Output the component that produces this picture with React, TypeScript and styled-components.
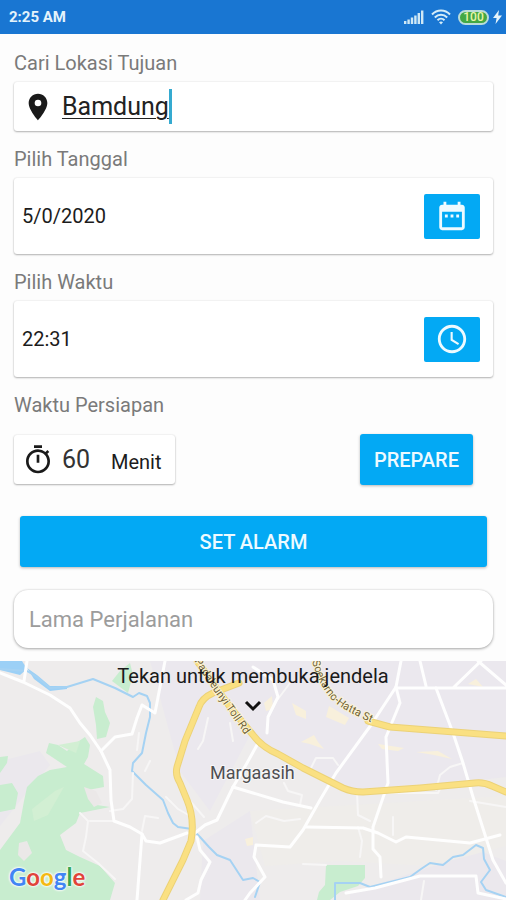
import React, { useState } from "react";
import styled, { createGlobalStyle } from "styled-components";

const GlobalStyle = createGlobalStyle`
  *, *::before, *::after { box-sizing: border-box; }
  body { margin: 0; background: #fdfdfd; font-family: Roboto, "Noto Sans", sans-serif; }
  button, input { font: inherit; }
`;

const Page = styled.div`
  display: flex;
  flex-direction: column;
  min-height: 100vh;
  background: #fdfdfd;
  color: #1c1c1c;
`;

const StatusBar = styled.header`
  display: flex;
  align-items: center;
  justify-content: space-between;
  height: 34px;
  padding: 0 4px 0 9px;
  background: #1976d2;
  color: #e4f3fb;
  font-size: 15px;
  font-weight: 700;
`;

const StatusIcons = styled.div`
  display: flex;
  align-items: center;
  gap: 7px;
`;

const BatteryGroup = styled.div`
  display: flex;
  align-items: center;
  gap: 4px;
`;

const Battery = styled.span`
  display: flex;
  align-items: center;
  justify-content: center;
  width: 31px;
  height: 15px;
  border: 2px solid #b9dcd9;
  border-radius: 8px;
  background: #43a843;
  color: #e9f5a8;
  font-size: 12px;
  font-weight: 500;
  line-height: 11px;
`;

const Form = styled.form`
  display: flex;
  flex-direction: column;
  gap: 16px;
  padding: 17px 13px 13px 14px;
`;

const Field = styled.div`
  display: flex;
  flex-direction: column;
  gap: 7px;
`;

const Label = styled.label`
  color: #7a7a7a;
  font-size: 20px;
  line-height: 24px;
`;

const Card = styled.div<{ $height: number }>`
  display: flex;
  align-items: center;
  min-height: ${(p) => p.$height}px;
  padding: 0 13px 0 8px;
  border-radius: 3px;
  background: #fff;
  box-shadow: 0 1px 2px rgba(0, 0, 0, 0.28), 0 0 2px rgba(0, 0, 0, 0.12);
`;

const PlaceInput = styled.input`
  field-sizing: content;
  margin-left: 8px;
  padding: 0;
  border: 0;
  outline: 0;
  background: transparent;
  color: #222;
  font-size: 25px;
  line-height: 34px;
  text-decoration: underline;
  text-decoration-thickness: 1px;
  text-underline-offset: 3px;
`;

const Caret = styled.span`
  width: 3px;
  height: 35px;
  background: #35aad0;
`;

const ValueInput = styled.input`
  flex: 1;
  min-width: 0;
  padding: 0;
  border: 0;
  outline: 0;
  background: transparent;
  color: #1c1c1c;
  font-size: 20px;
`;

const IconButton = styled.button`
  display: flex;
  align-items: center;
  justify-content: center;
  width: 56px;
  height: 45px;
  padding: 0;
  border: 0;
  border-radius: 2px;
  background: #03a9f4;
  color: #eefaff;
`;

const PrepareRow = styled.div`
  display: flex;
  align-items: center;
  justify-content: space-between;
  padding: 10px 20px 0 0;
`;

const MinutesCard = styled(Card)`
  width: 161px;
  padding: 0 8px;
`;

const MinutesInput = styled.input`
  width: 49px;
  margin-left: 8px;
  padding: 0;
  border: 0;
  outline: 0;
  background: transparent;
  color: #333;
  font-size: 25px;
`;

const Unit = styled.span`
  padding-top: 4px;
  font-size: 20px;
`;

const ActionButton = styled.button<{ $wide?: boolean }>`
  height: 51px;
  padding: 0 14px;
  margin: ${(p) => (p.$wide ? "15px 6px 7px" : "0")};
  border: 0;
  border-radius: 3px;
  background: #03a9f4;
  box-shadow: 0 1px 3px rgba(0, 0, 0, 0.28);
  color: #eefaff;
  font-size: 20px;
  font-weight: 500;
`;

const DurationInput = styled.input`
  width: 100%;
  height: 58px;
  padding: 0 15px;
  border: 0;
  outline: 0;
  border-radius: 14px;
  background: #fff;
  box-shadow: 0 1px 3px rgba(0, 0, 0, 0.32), 0 0 2px rgba(0, 0, 0, 0.12);
  font-size: 22px;
  &::placeholder { color: #9c9c9c; opacity: 1; }
`;

const MapPanel = styled.section`
  position: relative;
  display: flex;
  flex: 1;
  flex-direction: column;
  justify-content: space-between;
  min-height: 239px;
  overflow: hidden;
  background: #eeecec;
`;

const MapCanvas = styled.svg`
  position: absolute;
  inset: 0;
  width: 100%;
  height: 100%;
`;

const SheetToggle = styled.button`
  position: relative;
  display: flex;
  flex-direction: column;
  align-items: center;
  gap: 12px;
  padding: 3px 0 0;
  border: 0;
  background: transparent;
  color: #1a1a1a;
  font-size: 20px;
  line-height: 24px;
`;

const GoogleLogo = styled.a`
  position: relative;
  align-self: flex-start;
  padding: 0 0 9px 9px;
  font-family: Lato, sans-serif;
  font-size: 24px;
  font-weight: 700;
  line-height: 28px;
  text-decoration: none;
  text-shadow: 0 0 2px #fff, 0 0 2px #fff, 0 0 3px #fff;
`;

const Letter = styled.span<{ $color: string }>`
  color: ${(p) => p.$color};
`;

const logoLetters = [
  ["G", "#4285f4"],
  ["o", "#e0443a"],
  ["o", "#f4b912"],
  ["g", "#4285f4"],
  ["l", "#34a853"],
  ["e", "#e0443a"],
];

const SignalIcon = () => (
  <svg width="20" height="15" viewBox="0 0 20 15" fill="#cfe8f5" aria-hidden="true">
    <rect x="0" y="11" width="2.4" height="3" />
    <rect x="3.4" y="9.5" width="2.4" height="4.5" />
    <rect x="6.8" y="7.5" width="2.4" height="6.5" />
    <rect x="10.2" y="5.5" width="2.4" height="8.5" />
    <rect x="13.6" y="3" width="2.4" height="11" />
    <rect x="17" y="0.5" width="2.4" height="13.5" />
  </svg>
);

const WifiIcon = () => (
  <svg width="20" height="16" viewBox="0 0 20 16" fill="none" stroke="#d5edf8" strokeWidth="2" aria-hidden="true">
    <path d="M1 5.5C6 .2 14 .2 19 5.5" />
    <path d="M3.8 8.5c3.6-3.6 8.8-3.6 12.4 0" />
    <path d="M6.5 11.3c2-2 5-2 7 0" />
    <path d="M8 13.200 10 15.500l2-2.300c-1.200-1-2.800-1-4 0z" fill="#d5edf8" stroke="none" />
  </svg>
);

const BoltIcon = () => (
  <svg width="9" height="14" viewBox="0 0 9 14" fill="#e4f3fb" aria-hidden="true">
    <path d="M6 0 0 8h3.6L2.5 14 9 5.500H5.200z" />
  </svg>
);

const PinIcon = () => (
  <svg width="32" height="32" viewBox="0 0 24 24" fill="#1a1a1a" aria-hidden="true">
    <path d="M12 2C8.130 2 5 5.130 5 9c0 5.250 7 13 7 13s7-7.750 7-13c0-3.870-3.130-7-7-7zm0 9.500a2.500 2.500 0 1 1 0-5 2.500 2.500 0 0 1 0 5z" />
  </svg>
);

const CalendarIcon = () => (
  <svg width="34" height="34" viewBox="0 0 24 24" fill="currentColor" aria-hidden="true">
    <path d="M9 11H7v2h2v-2zm4 0h-2v2h2v-2zm4 0h-2v2h2v-2zm2-7h-1V2h-2v2H8V2H6v2H5c-1.110 0-2 .9-2 2v14c0 1.100.89 2 2 2h14c1.100 0 2-.9 2-2V6c0-1.100-.9-2-2-2zm0 16H5V9h14v11z" />
  </svg>
);

const ClockIcon = () => (
  <svg width="34" height="34" viewBox="0 0 24 24" fill="currentColor" aria-hidden="true">
    <path d="M11.990 2C6.470 2 2 6.480 2 12s4.470 10 9.990 10C17.520 22 22 17.520 22 12S17.520 2 11.990 2zM12 20c-4.420 0-8-3.580-8-8s3.580-8 8-8 8 3.580 8 8-3.580 8-8 8zm.5-13H11v6l5.250 3.150.75-1.230-4.500-2.670z" />
  </svg>
);

const TimerIcon = () => (
  <svg width="32" height="32" viewBox="0 0 24 24" fill="#1a1a1a" aria-hidden="true">
    <path d="M15 1H9v2h6V1zm-4 13h2V8h-2v6zm8.030-6.610 1.420-1.420c-.43-.51-.9-.99-1.410-1.410l-1.420 1.420A8.962 8.962 0 0 0 12 4a9 9 0 1 0 9 9c0-2.120-.74-4.070-1.970-5.610zM12 20c-3.870 0-7-3.130-7-7s3.130-7 7-7 7 3.130 7 7-3.130 7-7 7z" />
  </svg>
);

const ChevronIcon = () => (
  <svg width="18" height="12" viewBox="0 0 18 12" fill="none" stroke="#111" strokeWidth="3" aria-hidden="true">
    <path d="M2 2l7 7 7-7" />
  </svg>
);

const parks = [
  "M0 189 20 162 24 140 27 126 38 115 50 109 67 106 46 92 49 82 58 84 67 90 76 82 85 76 90 84 88 96 84 103 103 115 104 126 88 129 97 144 110 146 80 152 76 162 60 174 66 189 80 196 100 205 115 222 110 239H0Z",
  "M0 96 8 95 7 102 0 112ZM0 124 12 122 18 132 15 148 0 151Z",
  "M96 36 103 40 105 51 110 62 106 76 97 78 96 64 93 46Z",
  "M112 20 120 10 130 2 133 14 128 32Z",
  "M326 204H365V217L358 225 340 231 330 239H317L319 231 325 224Z",
];

const sandPatches = [
  "M301 81 314 74 318 81 324 88 310 83Z",
  "M292 42 306 50 306 58 296 54Z",
  "M329 45 349 57 345 64 326 56Z",
  "M378 83 404 87 398 90 382 88Z",
  "M416 91 438 90 452 98 434 94Z",
  "M264 42 272 35 273 48 266 50Z",
  "M468 23 476 18 483 26Z",
  "M245 178 253 176V184L247 185Z",
];

const rivers = [
  "M0 8 27 10 37 16 50 27 67 26 80 22 93 18 115 27 133 36 139 32 147 35 150 42 150 56 146 72 142 92 133 102 132 110 146 124 163 139 168 152 173 162 178 166 192 168 200 176 209 186 217 194 230 199 243 219 253 217 260 221 255 236",
  "M335 239 335 222 348 222 360 222 370 226 390 221 410 216 421 208 430 202 443 204 453 196 463 194 476 184 483 187 484 198 490 209 481 221 486 229 506 236",
];

const streets = [
  "M0 12 23 21 50 34 70 47 80 62 90 74 101 90 110 109 111 139 114 160 130 166 142 173 146 180 160 182 187 172",
  "M27 0 24 20",
  "M101 90 115 76 132 73 137 57 142 44 155 52 165 0",
  "M142 173 137 239",
  "M195 172 205 164 217 159 233 126 247 102 257 84",
  "M197 176 200 189 210 201 201 219 198 232 186 239",
  "M233 126 253 132 283 141 311 147",
  "M401 0 396 26 371 64 336 112 320 139 303 169 290 186 256 184 254 196 265 216 250 232 245 239",
  "M306 166 363 167 378 172 396 181 406 176 470 182 500 174",
  "M396 26 400 42 386 76 388 122 373 166 373 188 380 196 381 216",
  "M396 27H506M481 0 453 27M420 0 426 25M478 0 506 24",
  "M436 27 453 72 463 102 473 136 493 199 506 222",
  "M346 232 375 227 420 215H476L478 232 506 238",
  "M253 6 273 19 278 36 268 56 267 72",
];

const lanes = [
  "M290 22 278 38M310 109 316 97 333 97 338 104",
  "M436 129 440 114 450 106 463 102M388 132H438L440 128",
  "M284 122 288 130 302 134 300 144M256 162 266 155 284 160 300 158",
  "M358 166 362 180 360 196M303 203 326 204M393 156V174",
  "M80 152 88 160 86 176 83 190 98 202 115 218M90 160 114 160",
  "M133 112 132 138 123 148 110 150M137 89 139 72",
  "M166 136 178 148 192 156M190 140 204 156M158 157 145 155 142 170",
  "M208 57 203 80 198 88M150 100 145 110M230 62 233 80",
  "M357 131 358 154 370 160M421 239 424 220M470 140 506 146",
];

const highways = [
  "M239 22 213 32Q202 37 199 46L185 80 177 106Q175 114 180 122L187 139Q195 158 191 180L183 199 163 239",
  "M197 0 230 46 253 74Q262 86 278 93L303 107 343 127Q352 131 363 131L420 127 475 122Q484 121 492 125L506 131",
  "M368 60 390 66 506 75",
];

const MapDrawing = () => (
  <MapCanvas viewBox="0 0 506 239" preserveAspectRatio="xMidYMid slice" role="img" aria-label="Peta Margaasih">
    <rect width="506" height="239" fill="#eeecec" />
    <path d="M150 0H506V116L470 120 350 128 250 74 210 150 180 110Z" fill="#ebe8ee" />
    <path d="M203 180 250 150 260 239H200ZM350 232 480 190 506 200V239H350ZM0 100 40 90 50 104 20 140 0 165Z" fill="#ebe8ed" />
    <path d="M250 150 506 135V185L430 205 340 200 265 205Z" fill="#efedea" />
    {parks.map((d) => <path key={d} d={d} fill="#c8edcf" />)}
    <path d="M32 148 55 130 64 126 48 154 34 160ZM58 84 80 80 76 92Z" fill="#d2efd3" />
    <path d="M19 182 27 180 32 192 24 200 18 194ZM84 126 96 130 102 142 94 146 88 138Z" fill="#ebe8e8" />
    {sandPatches.map((d) => <path key={d} d={d} fill="#f8f0dc" />)}
    <path d="M0 0H22L27 8 20 14 0 9Z" fill="#9cd0f6" />
    <path d="M27 7 37 14 50 25 67 25V28L50 30 34 18Z" fill="#9cd0f6" />
    <g fill="none" strokeLinejoin="round" strokeLinecap="round">
      {rivers.map((d) => <path key={d} d={d} stroke="#a5d2f3" strokeWidth="2" />)}
      {lanes.map((d) => <path key={d} d={d} stroke="#f7f6f6" strokeWidth="2" />)}
      {streets.map((d) => <path key={d} d={d} stroke="#fefefe" strokeWidth="3" />)}
      {highways.map((d) => <path key={d} d={d} stroke="#ecd277" strokeWidth="7" />)}
      {highways.map((d) => <path key={d} d={d} stroke="#fae082" strokeWidth="5" />)}
    </g>
    <path id="toll-road" d="M194 0 214 30 248 78" fill="none" />
    <path id="hatta-road" d="M312 0Q322 36 344 48T378 64" fill="none" />
    <g fontFamily="Roboto, sans-serif" fontSize="11" fill="#6f6136" stroke="#fbf3d5" strokeWidth="2" paintOrder="stroke">
      <text><textPath href="#toll-road">Padaleunyi Toll Rd</textPath></text>
      <text><textPath href="#hatta-road">Soekarno-Hatta St</textPath></text>
    </g>
    <text x="210" y="118" fontFamily="Roboto, sans-serif" fontSize="18" fill="#4f4f52" stroke="#f7f6f7" strokeWidth="2" paintOrder="stroke">
      Margaasih
    </text>
  </MapCanvas>
);

export default function App() {
  const [place, setPlace] = useState("Bamdung");
  const [date, setDate] = useState("5/0/2020");
  const [time, setTime] = useState("22:31");
  const [minutes, setMinutes] = useState("60");

  return (
    <Page>
      <GlobalStyle />
      <StatusBar>
        <span>2:25 AM</span>
        <StatusIcons>
          <SignalIcon />
          <WifiIcon />
          <BatteryGroup>
            <Battery>100</Battery>
            <BoltIcon />
          </BatteryGroup>
        </StatusIcons>
      </StatusBar>
      <Form onSubmit={(e) => e.preventDefault()}>
        <Field>
          <Label htmlFor="place">Cari Lokasi Tujuan</Label>
          <Card $height={49}>
            <PinIcon />
            <PlaceInput id="place" value={place} onChange={(e) => setPlace(e.target.value)} />
            <Caret />
          </Card>
        </Field>
        <Field>
          <Label htmlFor="date">Pilih Tanggal</Label>
          <Card $height={76}>
            <ValueInput id="date" value={date} onChange={(e) => setDate(e.target.value)} />
            <IconButton type="button" aria-label="Pilih Tanggal"><CalendarIcon /></IconButton>
          </Card>
        </Field>
        <Field>
          <Label htmlFor="time">Pilih Waktu</Label>
          <Card $height={76}>
            <ValueInput id="time" value={time} onChange={(e) => setTime(e.target.value)} />
            <IconButton type="button" aria-label="Pilih Waktu"><ClockIcon /></IconButton>
          </Card>
        </Field>
        <Field>
          <Label htmlFor="minutes">Waktu Persiapan</Label>
          <PrepareRow>
            <MinutesCard $height={49}>
              <TimerIcon />
              <MinutesInput id="minutes" inputMode="numeric" value={minutes} onChange={(e) => setMinutes(e.target.value)} />
              <Unit>Menit</Unit>
            </MinutesCard>
            <ActionButton type="button">PREPARE</ActionButton>
          </PrepareRow>
        </Field>
        <ActionButton type="submit" $wide>SET ALARM</ActionButton>
        <DurationInput aria-label="Lama Perjalanan" placeholder="Lama Perjalanan" />
      </Form>
      <MapPanel>
        <MapDrawing />
        <SheetToggle type="button">
          Tekan untuk membuka jendela
          <ChevronIcon />
        </SheetToggle>
        <GoogleLogo href="#maps" aria-label="Google">
          {logoLetters.map(([letter, color], i) => (
            <Letter key={i} $color={color}>{letter}</Letter>
          ))}
        </GoogleLogo>
      </MapPanel>
    </Page>
  );
}
